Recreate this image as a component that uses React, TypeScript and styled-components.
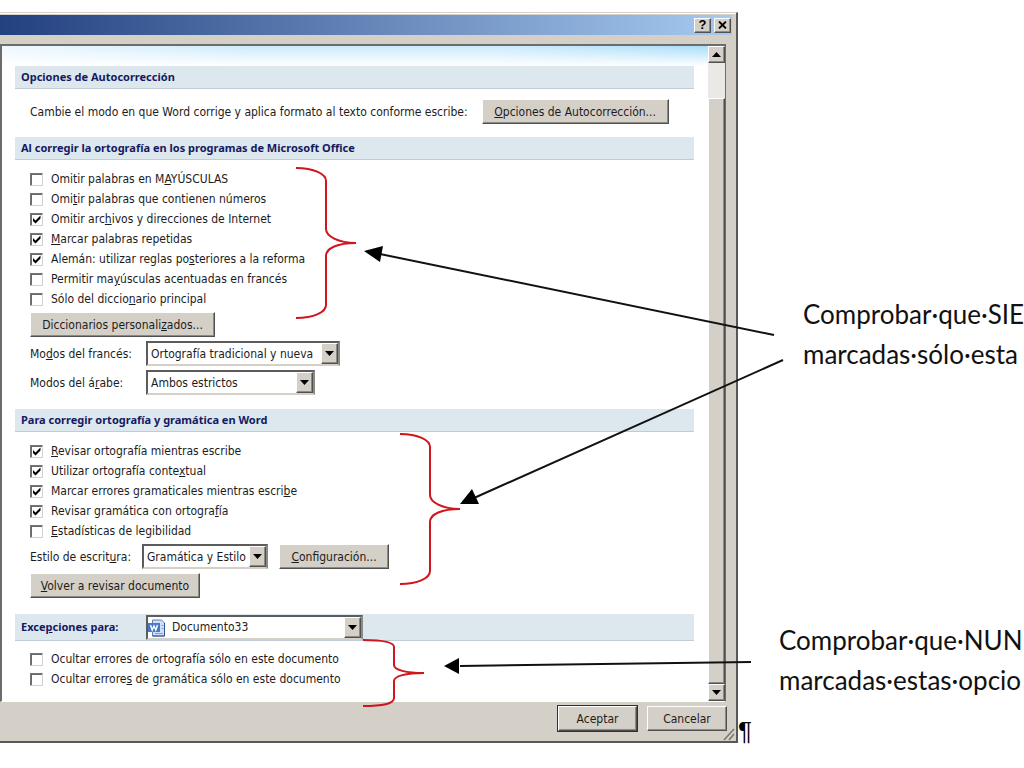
import React, { ReactNode } from 'react';
import styled, { createGlobalStyle } from 'styled-components';

const GlobalStyle = createGlobalStyle`
  * { box-sizing: border-box; }
  body {
    margin: 0;
    background: #fff;
    color: #1c1c1c;
    font-family: 'DejaVu Sans Condensed', 'Noto Sans', sans-serif;
    font-size: 12px;
    line-height: 20px;
    overflow: hidden;
  }
`;

const Page = styled.main`
  position: relative;
  display: flex;
  padding-top: 12px;
  min-height: 100vh;
  overflow: hidden;
`;

const Dialog = styled.section`
  flex: 0 1 738px;
  align-self: flex-start;
  background: #d4d0c8;
  border-top: 1px solid #d4d0c8;
  border-right: 2px solid #585858;
  border-bottom: 2px solid #585858;
  box-shadow: inset 0 1px #fff;
`;

const TitleBar = styled.header`
  display: flex;
  align-items: center;
  justify-content: flex-end;
  gap: 3px;
  height: 20px;
  margin: 2px 4px 0 0;
  padding-right: 1px;
  background: linear-gradient(90deg, #23407f, #a6caf0);
`;

const bevel = `
  border: 1px solid;
  border-color: #fff #505050 #505050 #fff;
  box-shadow: inset -1px -1px #8c8a84;
  background: #d4d0c8;
`;

const CaptionButton = styled.button`
  ${bevel}
  display: grid;
  place-items: center;
  width: 17px;
  height: 15px;
  padding: 0;
  color: #000;
  font: 700 13px/12px 'Liberation Sans', sans-serif;
`;

const Frame = styled.div`
  display: flex;
  min-height: 658px;
  margin: 9px 10px 0 0;
  border: 2px solid #6c6c6a;
  border-right-width: 1px;
  border-bottom: 1px solid #fff;
  background: #fff;
`;

const Content = styled.div`
  flex: 1;
  min-width: 0;
  padding: 20px 14px 0 13px;
  background:
    linear-gradient(rgba(255, 255, 255, 0), #fff) top / 100% 20px no-repeat,
    linear-gradient(90deg, #eef8fe, #cdebfc 35%, #cdebfc 70%, #a9def8) top / 100% 20px no-repeat;
`;

const ScrollBar = styled.div`
  display: flex;
  flex-direction: column;
  flex: 0 0 17px;
  background: #ebe9e5;
`;

const ScrollButton = styled.button`
  ${bevel}
  display: grid;
  place-items: center;
  width: 17px;
  height: 17px;
  padding: 0;
`;

const Thumb = styled.div`
  ${bevel}
  flex: 1;
  margin-top: 35px;
`;

const Heading = styled.h2<{ $tall?: boolean }>`
  display: flex;
  align-items: center;
  height: ${p => (p.$tall ? 27 : 23)}px;
  margin: 0;
  padding: 0 6px;
  background: #dde7ee;
  border-bottom: 1px solid #c3ccd4;
  color: #14195f;
  font: 700 11px/16px 'Noto Sans', sans-serif;
`;

const HeadingLabel = styled.label`
  width: 125px;
`;

const Group = styled.div<{ $top: number; $bottom: number }>`
  display: flex;
  flex-direction: column;
  align-items: flex-start;
  padding: ${p => p.$top}px 15px ${p => p.$bottom}px;
`;

const Options = styled.div`
  padding-bottom: 3px;
`;

const Row = styled.div<{ $gap?: number; $after?: number }>`
  display: flex;
  align-items: center;
  gap: ${p => p.$gap ?? 0}px;
  margin-bottom: ${p => p.$after ?? 0}px;
  white-space: nowrap;
`;

const Check = styled.label`
  display: flex;
  align-items: center;
  height: 20px;
  gap: 8px;
  white-space: nowrap;
`;

const Box = styled.span`
  display: grid;
  width: 13px;
  height: 13px;

  > * { grid-area: 1 / 1; }
  svg { pointer-events: none; visibility: hidden; }
  input:checked + svg { visibility: visible; }
`;

const BoxInput = styled.input`
  appearance: none;
  width: 13px;
  height: 13px;
  margin: 0;
  background: #fff;
  border: 1px solid;
  border-color: #77756f #d4d0c8 #d4d0c8 #77756f;
  box-shadow: inset 1px 1px #6a6a6a;
`;

const FieldLabel = styled.label<{ $width: number }>`
  width: ${p => p.$width}px;
`;

const PushButton = styled.button<{ $width: number; $default?: boolean }>`
  ${bevel}
  width: ${p => p.$width}px;
  height: 25px;
  padding: 0;
  color: #1c1c1c;
  font: inherit;
  white-space: nowrap;
  outline: ${p => (p.$default ? '1px solid #303030' : 'none')};
`;

const SelectBox = styled.span<{ $width: number }>`
  position: relative;
  display: flex;
  width: ${p => p.$width}px;
  height: 25px;
  border: 2px solid;
  border-color: #5c5c5c #8c8a84 #d4d0c8 #5c5c5c;
  background: #fff;
`;

const Select = styled.select<{ $indent?: boolean }>`
  appearance: none;
  flex: 1;
  min-width: 0;
  border: 0;
  padding: 0 0 0 ${p => (p.$indent ? 24 : 3)}px;
  background: transparent;
  color: #1c1c1c;
  font: 12px/20px 'DejaVu Sans Condensed', 'Noto Sans', sans-serif;
`;

const Drop = styled.span`
  ${bevel}
  position: absolute;
  top: 0;
  right: 0;
  bottom: 0;
  width: 17px;
  display: grid;
  place-items: center;
  pointer-events: none;
`;

const DocIcon = styled.svg`
  position: absolute;
  top: 2px;
  left: 0;
  pointer-events: none;
`;

const Footer = styled.footer`
  display: flex;
  justify-content: flex-end;
  gap: 10px;
  padding: 4px 9px 10px 0;
  position: relative;
`;

const Grip = styled.svg`
  position: absolute;
  right: 0;
  bottom: 0;
`;

const Pilcrow = styled.span`
  flex: 0 0 16px;
  align-self: flex-start;
  margin-top: 701px;
  color: #000;
  font: 26px/36px 'Liberation Sans', sans-serif;
`;

const Notes = styled.aside`
  flex: 1;
  min-width: 0;
  display: flex;
  flex-direction: column;
  gap: 246px;
  padding-top: 282px;
`;

const Note = styled.p<{ $indent: number }>`
  margin: 0;
  padding-left: ${p => p.$indent}px;
  color: #111;
  font: 26px/40px Lato, sans-serif;
  white-space: nowrap;
`;

const Annotations = styled.svg`
  position: absolute;
  top: 0;
  left: 0;
  pointer-events: none;
`;

const Arrow = ({ up = false }: { up?: boolean }) => (
  <svg width="9" height="5" viewBox="0 0 9 5" aria-hidden="true">
    <path d={up ? 'M0 5 4.500 0 9 5z' : 'M0 0h9L4.500 5z'} fill="#000" />
  </svg>
);

const Option = ({ on = false, children }: { on?: boolean; children: ReactNode }) => (
  <Check>
    <Box>
      <BoxInput type="checkbox" defaultChecked={on} />
      <svg width="13" height="13" viewBox="0 0 13 13" aria-hidden="true">
        <path d="M3 5 5.500 7.500 10.500 2.500v3L5.500 10.500 3 8z" fill="#000" />
      </svg>
    </Box>
    <span>{children}</span>
  </Check>
);

const Combo = ({ id, width, value, icon }: { id: string; width: number; value: string; icon?: ReactNode }) => (
  <SelectBox $width={width}>
    {icon}
    <Select id={id} $indent={!!icon}>
      <option>{value}</option>
    </Select>
    <Drop><Arrow /></Drop>
  </SelectBox>
);

const WordIcon = () => (
  <DocIcon width="18" height="18" viewBox="0 0 18 18" aria-hidden="true">
    <path d="M4.500 1h9l3 3v13h-12z" fill="#cfe1f8" stroke="#5b7fb8" />
    <path d="M16.500 4v13h-12" fill="none" stroke="#31508c" />
    <path d="M7 14.500h8M13.500 6.500h2M13.500 9.500h2" stroke="#7fa3d6" />
    <rect x="0" y="4" width="12" height="9" fill="#4a78c4" />
    <path d="M2.500 6 4.200 11 6 7 7.800 11 9.500 6" fill="none" stroke="#fff" strokeWidth="1.400" />
  </DocIcon>
);

export default function App() {
  return (
    <>
      <GlobalStyle />
      <Page>
        <Dialog aria-label="Opciones de Word">
          <TitleBar>
            <CaptionButton aria-label="Ayuda">?</CaptionButton>
            <CaptionButton aria-label="Cerrar">
              <svg width="9" height="8" viewBox="0 0 9 8" aria-hidden="true">
                <path d="M1 .5 8 7.500M8 .5 1 7.500" stroke="#000" strokeWidth="1.800" />
              </svg>
            </CaptionButton>
          </TitleBar>
          <Frame>
            <Content>
              <Heading>Opciones de Autocorrección</Heading>
              <Group $top={10} $bottom={13}>
                <Row $gap={14}>
                  <span>Cambie el modo en que Word corrige y aplica formato al texto conforme escribe:</span>
                  <PushButton $width={187}><u>O</u>pciones de Autocorrección...</PushButton>
                </Row>
              </Group>
              <Heading>Al corregir la ortografía en los programas de Microsoft Office</Heading>
              <Group $top={9} $bottom={14}>
                <Options>
                  <Option>Omitir palabras en M<u>A</u>YÚSCULAS</Option>
                  <Option>Omi<u>t</u>ir palabras que contienen números</Option>
                  <Option on>Omitir arc<u>h</u>ivos y direcciones de Internet</Option>
                  <Option on><u>M</u>arcar palabras repetidas</Option>
                  <Option on>Alemán: utilizar reglas po<u>s</u>teriores a la reforma</Option>
                  <Option>Permitir ma<u>y</u>úsculas acentuadas en francés</Option>
                  <Option>Sólo del diccio<u>n</u>ario principal</Option>
                </Options>
                <Row $after={4}>
                  <PushButton $width={185}>Diccionarios personali<u>z</u>ados...</PushButton>
                </Row>
                <Row $after={4}>
                  <FieldLabel $width={116} htmlFor="frances">Mo<u>d</u>os del francés:</FieldLabel>
                  <Combo id="frances" width={194} value="Ortografía tradicional y nueva" />
                </Row>
                <Row>
                  <FieldLabel $width={116} htmlFor="arabe">Modos del á<u>r</u>abe:</FieldLabel>
                  <Combo id="arabe" width={169} value="Ambos estrictos" />
                </Row>
              </Group>
              <Heading>Para corregir ortografía y gramática en Word</Heading>
              <Group $top={9} $bottom={16}>
                <Options>
                  <Option on><u>R</u>evisar ortografía mientras escribe</Option>
                  <Option on>Utilizar ortografía conte<u>x</u>tual</Option>
                  <Option on>Marcar errores gramaticales mientras escri<u>b</u>e</Option>
                  <Option on>Revisar gramática con ortogra<u>f</u>ía</Option>
                  <Option><u>E</u>stadísticas de legibilidad</Option>
                </Options>
                <Row $after={4}>
                  <FieldLabel $width={112} htmlFor="estilo">Estilo de escrit<u>u</u>ra:</FieldLabel>
                  <Row $gap={11}>
                    <Combo id="estilo" width={126} value="Gramática y Estilo" />
                    <PushButton $width={110}><u>C</u>onfiguración...</PushButton>
                  </Row>
                </Row>
                <PushButton $width={170}><u>V</u>olver a revisar documento</PushButton>
              </Group>
              <Heading $tall>
                <HeadingLabel htmlFor="documento">Exce<u>p</u>ciones para:</HeadingLabel>
                <Combo id="documento" width={217} value="Documento33" icon={<WordIcon />} />
              </Heading>
              <Group $top={8} $bottom={0}>
                <Options>
                  <Option>Ocultar errores de orto<u>g</u>rafía sólo en este documento</Option>
                  <Option>Ocultar errore<u>s</u> de gramática sólo en este documento</Option>
                </Options>
              </Group>
            </Content>
            <ScrollBar>
              <ScrollButton aria-label="Subir"><Arrow up /></ScrollButton>
              <Thumb />
              <ScrollButton aria-label="Bajar"><Arrow /></ScrollButton>
            </ScrollBar>
          </Frame>
          <Footer>
            <PushButton $width={79} $default>Aceptar</PushButton>
            <PushButton $width={80}>Cancelar</PushButton>
            <Grip width="13" height="13" viewBox="0 0 13 13" aria-hidden="true">
              <path d="M1 12 11 1M6 12l5-6" stroke="#77756f" strokeWidth="1.500" />
            </Grip>
          </Footer>
        </Dialog>
        <Pilcrow>¶</Pilcrow>
        <Notes>
          <Note $indent={49}>Comprobar·que·SIE<br />marcadas·sólo·esta</Note>
          <Note $indent={25}>Comprobar·que·NUN<br />marcadas·estas·opcio</Note>
        </Notes>
        <Annotations width="1024" height="768" viewBox="0 0 1024 768" aria-hidden="true">
          <g fill="none" stroke="#d0151c" strokeWidth="2">
            <path d="M296 168C314 168 326 174 326 181V229C326 236 338 243 356 243C338 243 326 248 326 256V305C326 312 314 318 296 318" />
            <path d="M400 434C418 434 430 440 430 447V495C430 502 442 509 460 509C442 509 430 514 430 522V571C430 578 418 584 400 584" />
            <path d="M363 640C383 640 394 642 394 647V665C394 670 406 673 424 673C406 673 394 676 394 681V698C394 704 383 706 363 706" />
          </g>
          <g stroke="#111" strokeWidth="2">
            <path d="M774 335 380 254" />
            <path d="M783 360 474 498" />
            <path d="M751 662 460 666" />
          </g>
          <g fill="#000">
            <path d="M364 251 383 246 380 262z" />
            <path d="M460 504 472 489 479 504z" />
            <path d="M444 666 459 658V674z" />
          </g>
        </Annotations>
      </Page>
    </>
  );
}
